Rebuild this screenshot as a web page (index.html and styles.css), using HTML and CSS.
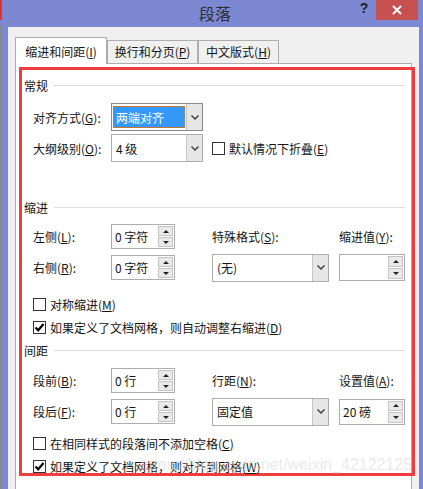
FILE: index.html
```html
<!DOCTYPE html>
<html lang="zh-CN">
<head>
<meta charset="utf-8">
<title>段落</title>
<link rel="stylesheet" href="styles.css">
</head>
<body>
<div class="titlebar">
  <div class="title">段落</div>
  <div class="help">?</div>
  <div class="close"><svg width="10" height="10" viewBox="0 0 10 10"><path d="M1 1L9 9M9 1L1 9" stroke="#fff" stroke-width="2" fill="none"/></svg></div>
</div>
<div class="dialog">
  <div class="tabs">
    <div class="tab t1 active">缩进和间距(<u>I</u>)</div>
    <div class="tab t2">换行和分页(<u>P</u>)</div>
    <div class="tab t3">中文版式(<u>H</u>)</div>
  </div>
  <div class="page">
    <div class="frame">
      <div class="heading">常规</div>
      <div class="row r-align">
        <div class="lbl">对齐方式(<u>G</u>):</div>
        <div class="select focus w92">
          <div class="val">两端对齐</div>
          <div class="arrow"><svg width="8" height="5" viewBox="0 0 8 5"><polyline points="0.5,0.5 4,4 7.5,0.5" fill="none" stroke="#444" stroke-width="1.5"/></svg></div>
        </div>
      </div>
      <div class="row r-outline">
        <div class="lbl">大纲级别(<u>O</u>):</div>
        <div class="select w92">
          <div class="val">4 级</div>
          <div class="arrow"><svg width="8" height="5" viewBox="0 0 8 5"><polyline points="0.5,0.5 4,4 7.5,0.5" fill="none" stroke="#444" stroke-width="1.5"/></svg></div>
        </div>
        <div class="cb ml9"></div>
        <div>默认情况下折叠(<u>E</u>)</div>
      </div>

      <div class="heading h2">缩进</div>
      <div class="grid g-indent">
        <div class="lbl">左侧(<u>L</u>):</div>
        <div class="spin"><div class="val">0 字符</div><div class="btns"><div class="btn up"></div><div class="btn dn"></div></div></div>
        <div>特殊格式(<u>S</u>):</div>
        <div>缩进值(<u>Y</u>):</div>

        <div class="lbl">右侧(<u>R</u>):</div>
        <div class="spin"><div class="val">0 字符</div><div class="btns"><div class="btn up"></div><div class="btn dn"></div></div></div>
        <div class="select w117">
          <div class="val">(无)</div>
          <div class="arrow"><svg width="8" height="5" viewBox="0 0 8 5"><polyline points="0.5,0.5 4,4 7.5,0.5" fill="none" stroke="#444" stroke-width="1.5"/></svg></div>
        </div>
        <div class="spin wide tall"><div class="val"></div><div class="btns"><div class="btn up"></div><div class="btn dn"></div></div></div>
      </div>
      <div class="crow mt16">
        <div class="cb"></div>
        <div>对称缩进(<u>M</u>)</div>
      </div>
      <div class="crow mt7">
        <div class="cb"><svg width="11" height="11" viewBox="0 0 11 11"><polyline points="1.5,5.5 4.2,8.3 9.5,2" fill="none" stroke="#000" stroke-width="2.2"/></svg></div>
        <div>如果定义了文档网格，则自动调整右缩进(<u>D</u>)</div>
      </div>

      <div class="heading h3">间距</div>
      <div class="grid g-space">
        <div class="lbl">段前(<u>B</u>):</div>
        <div class="spin"><div class="val">0 行</div><div class="btns"><div class="btn up"></div><div class="btn dn"></div></div></div>
        <div>行距(<u>N</u>):</div>
        <div>设置值(<u>A</u>):</div>

        <div class="lbl">段后(<u>F</u>):</div>
        <div class="spin"><div class="val">0 行</div><div class="btns"><div class="btn up"></div><div class="btn dn"></div></div></div>
        <div class="select w117">
          <div class="val">固定值</div>
          <div class="arrow"><svg width="8" height="5" viewBox="0 0 8 5"><polyline points="0.5,0.5 4,4 7.5,0.5" fill="none" stroke="#444" stroke-width="1.5"/></svg></div>
        </div>
        <div class="spin wide mid"><div class="val">20 磅</div><div class="btns"><div class="btn up"></div><div class="btn dn"></div></div></div>
      </div>
      <div class="crow mt11">
        <div class="cb"></div>
        <div>在相同样式的段落间不添加空格(<u>C</u>)</div>
      </div>
      <div class="crow mt7">
        <div class="cb"><svg width="11" height="11" viewBox="0 0 11 11"><polyline points="1.5,5.5 4.2,8.3 9.5,2" fill="none" stroke="#000" stroke-width="2.2"/></svg></div>
        <div>如果定义了文档网格，则对齐到网格(<u>W</u>)</div>
      </div>
    </div>
  </div>
</div>
<div class="watermark">https://blog.csdn.net/weixin_42122125</div>
</body>
</html>
```

FILE: styles.css
```css
* { box-sizing: border-box; }
html, body { margin: 0; padding: 0; }
body {
  width: 423px;
  height: 489px;
  overflow: hidden;
  background-color: #7d88d2;
  background-image: linear-gradient(to bottom, #e03434 0, #e03434 20px, #7d88d2 20px, #7d88d2 25px, #8a8a8a 25px);
  background-size: 2px 100%;
  background-repeat: no-repeat;
  font-family: "Noto Sans CJK SC", "Microsoft YaHei", sans-serif;
  font-size: 12px;
  color: #141414;
}
u { text-decoration: underline; text-underline-offset: 1px; }

.titlebar { display: flex; height: 27px; }
.title {
  flex: 1;
  text-align: center;
  padding-left: 74px;
  font-size: 16px;
  line-height: 27px;
  color: #2e2e2e;
}
.help {
  width: 16px;
  font: bold 14px "Liberation Sans", sans-serif;
  line-height: 17px;
  text-align: center;
  color: #222;
}
.close {
  width: 42px;
  height: 20px;
  margin: 0 5px 0 4px;
  background: #c75050;
  display: flex;
  align-items: center;
  justify-content: center;
}

.dialog {
  margin: 0 4px 0 8px;
  height: 462px;
  overflow: hidden;
  background: #f0f0f0;
  padding: 10px 7px 0;
}
.tabs { display: flex; align-items: flex-end; height: 26px; }
.tab {
  height: 23px;
  border: 1px solid #adadad;
  border-bottom: 0;
  background: #f0f0f0;
  text-align: center;
  line-height: 22px;
  white-space: nowrap;
}
.t1 { width: 92px; }
.t2 { width: 91px; }
.t3 { width: 81px; }
.tab.active {
  height: 27px;
  margin-bottom: -1px;
  padding-top: 3px;
  background: #fff;
  position: relative;
  z-index: 1;
}
.page {
  border: 1px solid #adadad;
  background: #fff;
  height: 430px;
}
.frame {
  margin: 3px -4px 0 3px;
  border: 3px solid #f03c3c;
  height: 409px;
}

.heading {
  display: flex;
  align-items: center;
  height: 16px;
  margin: 7px 7px 0 2px;
}
.heading::after {
  content: "";
  flex: 1;
  height: 1px;
  background: #dcdcdc;
  margin-left: 6px;
}
.heading.h2 { margin-top: 37px; }
.heading.h3 { margin-top: 7px; }

.row { display: flex; align-items: center; padding-left: 11px; }
.r-align { margin-top: 10px; height: 28px; }
.r-outline { margin-top: 3px; height: 28px; }
.lbl { width: 78px; white-space: nowrap; }

.select {
  display: flex;
  height: 28px;
  border: 1px solid #adadad;
  background: #fff;
}
.select .val { flex: 1; display: flex; align-items: center; padding-left: 4px; }
.select .arrow {
  width: 16px;
  border-left: 1px solid #c6c6c6;
  background: #e6e6e6;
  display: flex;
  align-items: center;
  justify-content: center;
}
.select.focus { border-color: #8a8a8a; }
.select.focus .val {
  margin: 2px 1px;
  padding-left: 2px;
  background: #3399ff;
  color: #fff;
  border: 1px dotted #c8782c;
}
.w92 { width: 92px; }
.w117 { width: 117px; }

.cb {
  width: 13px;
  height: 13px;
  flex: none;
  border: 1px solid #333;
  background: #fff;
  margin-right: 4px;
  display: flex;
  align-items: center;
  justify-content: center;
}
.ml9 { margin-left: 9px; }

.spin {
  display: flex;
  width: 64px;
  height: 25px;
  border: 1px solid #adadad;
  background: #fff;
}
.spin.wide { width: 66px; }
.spin.tall { height: 27px; }
.spin.mid { height: 26px; }
.spin .val { flex: 1; display: flex; align-items: center; padding-left: 3px; white-space: nowrap; }
.spin .btns {
  width: 16px;
  display: flex;
  flex-direction: column;
  padding: 1px 1px 1px 0;
  gap: 1px;
}
.spin .btn {
  flex: 1;
  background: #e9e9e9;
  border: 1px solid #c4c4c4;
  display: flex;
  align-items: center;
  justify-content: center;
}
.btn.up::before {
  content: "";
  border-left: 3px solid transparent;
  border-right: 3px solid transparent;
  border-bottom: 3px solid #222;
}
.btn.dn::before {
  content: "";
  border-left: 3px solid transparent;
  border-right: 3px solid transparent;
  border-top: 3px solid #222;
}

.grid {
  display: grid;
  grid-template-columns: 78px 101px 127px 66px;
  grid-template-rows: 25px 25px;
  row-gap: 6px;
  align-items: center;
  justify-items: start;
  padding-left: 11px;
  white-space: nowrap;
}
.g-indent { margin-top: 9px; }
.g-space { margin-top: 10px; }

.crow { display: flex; align-items: center; height: 16px; padding-left: 11px; white-space: nowrap; }
.mt16 { margin-top: 16px; }
.mt7 { margin-top: 7px; }
.mt11 { margin-top: 11px; }

.watermark {
  position: absolute;
  left: 140px;
  top: 456px;
  font: 16px "Liberation Sans", sans-serif;
  color: rgba(215, 215, 215, 0.55);
  white-space: nowrap;
  pointer-events: none;
}
```
